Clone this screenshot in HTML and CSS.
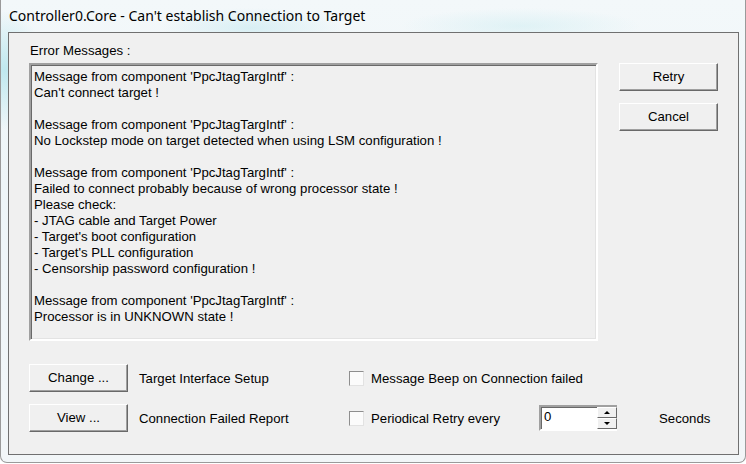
FILE: index.html
```html
<!DOCTYPE html>
<html lang="en">
<head>
    <meta charset="UTF-8">
    <title>Controller0.Core - Can't establish Connection to Target</title>
    <link rel="stylesheet" href="styles.css">
</head>
<body>

<div class="window">
    <div class="title-bar">Controller0.Core - Can't establish Connection to Target</div>

    <div class="client">
        <div class="top-row">
            <div class="messages">
                <div class="label">Error Messages :</div>
                <div class="message-box">
                    <div>Message from component 'PpcJtagTargIntf' :</div>
                    <div>Can't connect target !</div>
                    <div class="blank"></div>
                    <div>Message from component 'PpcJtagTargIntf' :</div>
                    <div>No Lockstep mode on target detected when using LSM configuration !</div>
                    <div class="blank"></div>
                    <div>Message from component 'PpcJtagTargIntf' :</div>
                    <div>Failed to connect probably because of wrong processor state !</div>
                    <div>Please check:</div>
                    <div>- JTAG cable and Target Power</div>
                    <div>- Target's boot configuration</div>
                    <div>- Target's PLL configuration</div>
                    <div>- Censorship password configuration !</div>
                    <div class="blank"></div>
                    <div>Message from component 'PpcJtagTargIntf' :</div>
                    <div>Processor is in UNKNOWN state !</div>
                </div>
            </div>
            <div class="side-buttons">
                <button class="button">Retry</button>
                <button class="button">Cancel</button>
            </div>
        </div>

        <div class="options">
            <button class="button">Change ...</button>
            <span class="option-label">Target Interface Setup</span>
            <label class="check"><span class="check-box"></span>Message Beep on Connection failed</label>
            <span></span>
            <span></span>

            <button class="button">View ...</button>
            <span class="option-label">Connection Failed Report</span>
            <label class="check"><span class="check-box"></span>Periodical Retry every</label>
            <div class="spin">
                <div class="spin-edit">0</div>
                <div class="spin-buttons">
                    <div class="spin-btn"><span class="arrow-up"></span></div>
                    <div class="spin-btn"><span class="arrow-down"></span></div>
                </div>
            </div>
            <span class="seconds">Seconds</span>
        </div>
    </div>
</div>

</body>
</html>
```

FILE: styles.css
```css
body {
    margin: 0;
    padding: 0;
    width: 746px;
    height: 464px;
    overflow: hidden;
    font-family: "Liberation Sans", Arial, sans-serif;
    font-size: 13.2px;
    color: #000;
}

.window {
    width: 746px;
    height: 463px;
    box-sizing: border-box;
    border: 1px solid #9a9a9a;
    border-top: none;
    border-radius: 0 0 7px 7px;
    background:
        radial-gradient(ellipse 40px 60px at 4px 70px, rgba(150, 220, 230, 0.55), transparent),
        radial-gradient(ellipse 90px 20px at 250px 28px, rgba(190, 230, 238, 0.5), transparent),
        radial-gradient(ellipse 120px 18px at 520px 26px, rgba(200, 235, 240, 0.45), transparent),
        linear-gradient(#f3f8fa, #eef5f8 40%, #f2f6f8);
    display: flex;
    flex-direction: column;
}

.title-bar {
    height: 32px;
    padding-left: 8px;
    font-family: "Noto Sans", "Open Sans", sans-serif;
    font-size: 14px;
    line-height: 32px;
    color: #000;
    white-space: nowrap;
}

.client {
    margin: 0 6px 0 7px;
    height: 423px;
    box-sizing: border-box;
    border: 1px solid #707070;
    background-color: #f0f0f0;
    padding: 10px 0 0 20px;
}

.top-row {
    display: flex;
    align-items: flex-start;
}

.label {
    line-height: 15px;
    height: 15px;
    margin-bottom: 5px;
    padding-left: 1px;
}

.message-box {
    width: 569px;
    height: 278px;
    box-sizing: border-box;
    border: 2px solid;
    border-color: #a0a0a0 #ffffff #ffffff #a0a0a0;
    box-shadow: inset 1px 1px 0 #696969, inset -1px -1px 0 #e3e3e3;
    padding: 4px 2px 0 3px;
    line-height: 16px;
    white-space: nowrap;
    overflow: hidden;
}

.blank {
    height: 16px;
}

.side-buttons {
    display: flex;
    flex-direction: column;
    gap: 12px;
    margin-left: 21px;
    margin-top: 20px;
}

.button {
    width: 99px;
    height: 28px;
    box-sizing: border-box;
    border: 1px solid;
    border-color: #ffffff #696969 #696969 #ffffff;
    box-shadow: inset -1px -1px 0 #a0a0a0;
    background-color: #f0f0f0;
    font-family: "Liberation Sans", Arial, sans-serif;
    font-size: 13.2px;
    color: #000;
    padding: 0 0 2px 0;
    margin: 0;
}

.options {
    display: grid;
    grid-template-columns: 99px 221px 190px 120px auto;
    grid-template-rows: 28px 28px;
    row-gap: 12px;
    margin-top: 23px;
    align-items: center;
}

.option-label {
    padding-left: 11px;
}

.check {
    display: flex;
    align-items: center;
    gap: 7px;
    white-space: nowrap;
}

.check-box {
    width: 15px;
    height: 15px;
    box-sizing: border-box;
    border: 1px solid;
    border-color: #8e8e8e #e2e2e2 #e2e2e2 #8e8e8e;
    background-color: #fbfbfb;
    flex: none;
}

.spin {
    display: flex;
    height: 26px;
    width: 78px;
}

.spin-edit {
    flex: 1;
    box-sizing: border-box;
    border: 2px solid;
    border-color: #a0a0a0 #ffffff #ffffff #a0a0a0;
    box-shadow: inset 1px 1px 0 #696969;
    border-right: none;
    background-color: #fff;
    padding: 2px 0 0 3px;
    line-height: 16px;
}

.spin-buttons {
    width: 20px;
    box-sizing: border-box;
    display: flex;
    flex-direction: column;
    border-top: 2px solid #a0a0a0;
    border-bottom: 2px solid #ffffff;
    background-color: #fff;
}

.spin-btn {
    flex: 1;
    box-sizing: border-box;
    border: 1px solid;
    border-color: #ffffff #696969 #696969 #ffffff;
    background-color: #f0f0f0;
    display: flex;
    align-items: center;
    justify-content: center;
}

.arrow-up {
    width: 0;
    height: 0;
    border-left: 3px solid transparent;
    border-right: 3px solid transparent;
    border-bottom: 3px solid #000;
}

.arrow-down {
    width: 0;
    height: 0;
    border-left: 3px solid transparent;
    border-right: 3px solid transparent;
    border-top: 3px solid #000;
}
```
